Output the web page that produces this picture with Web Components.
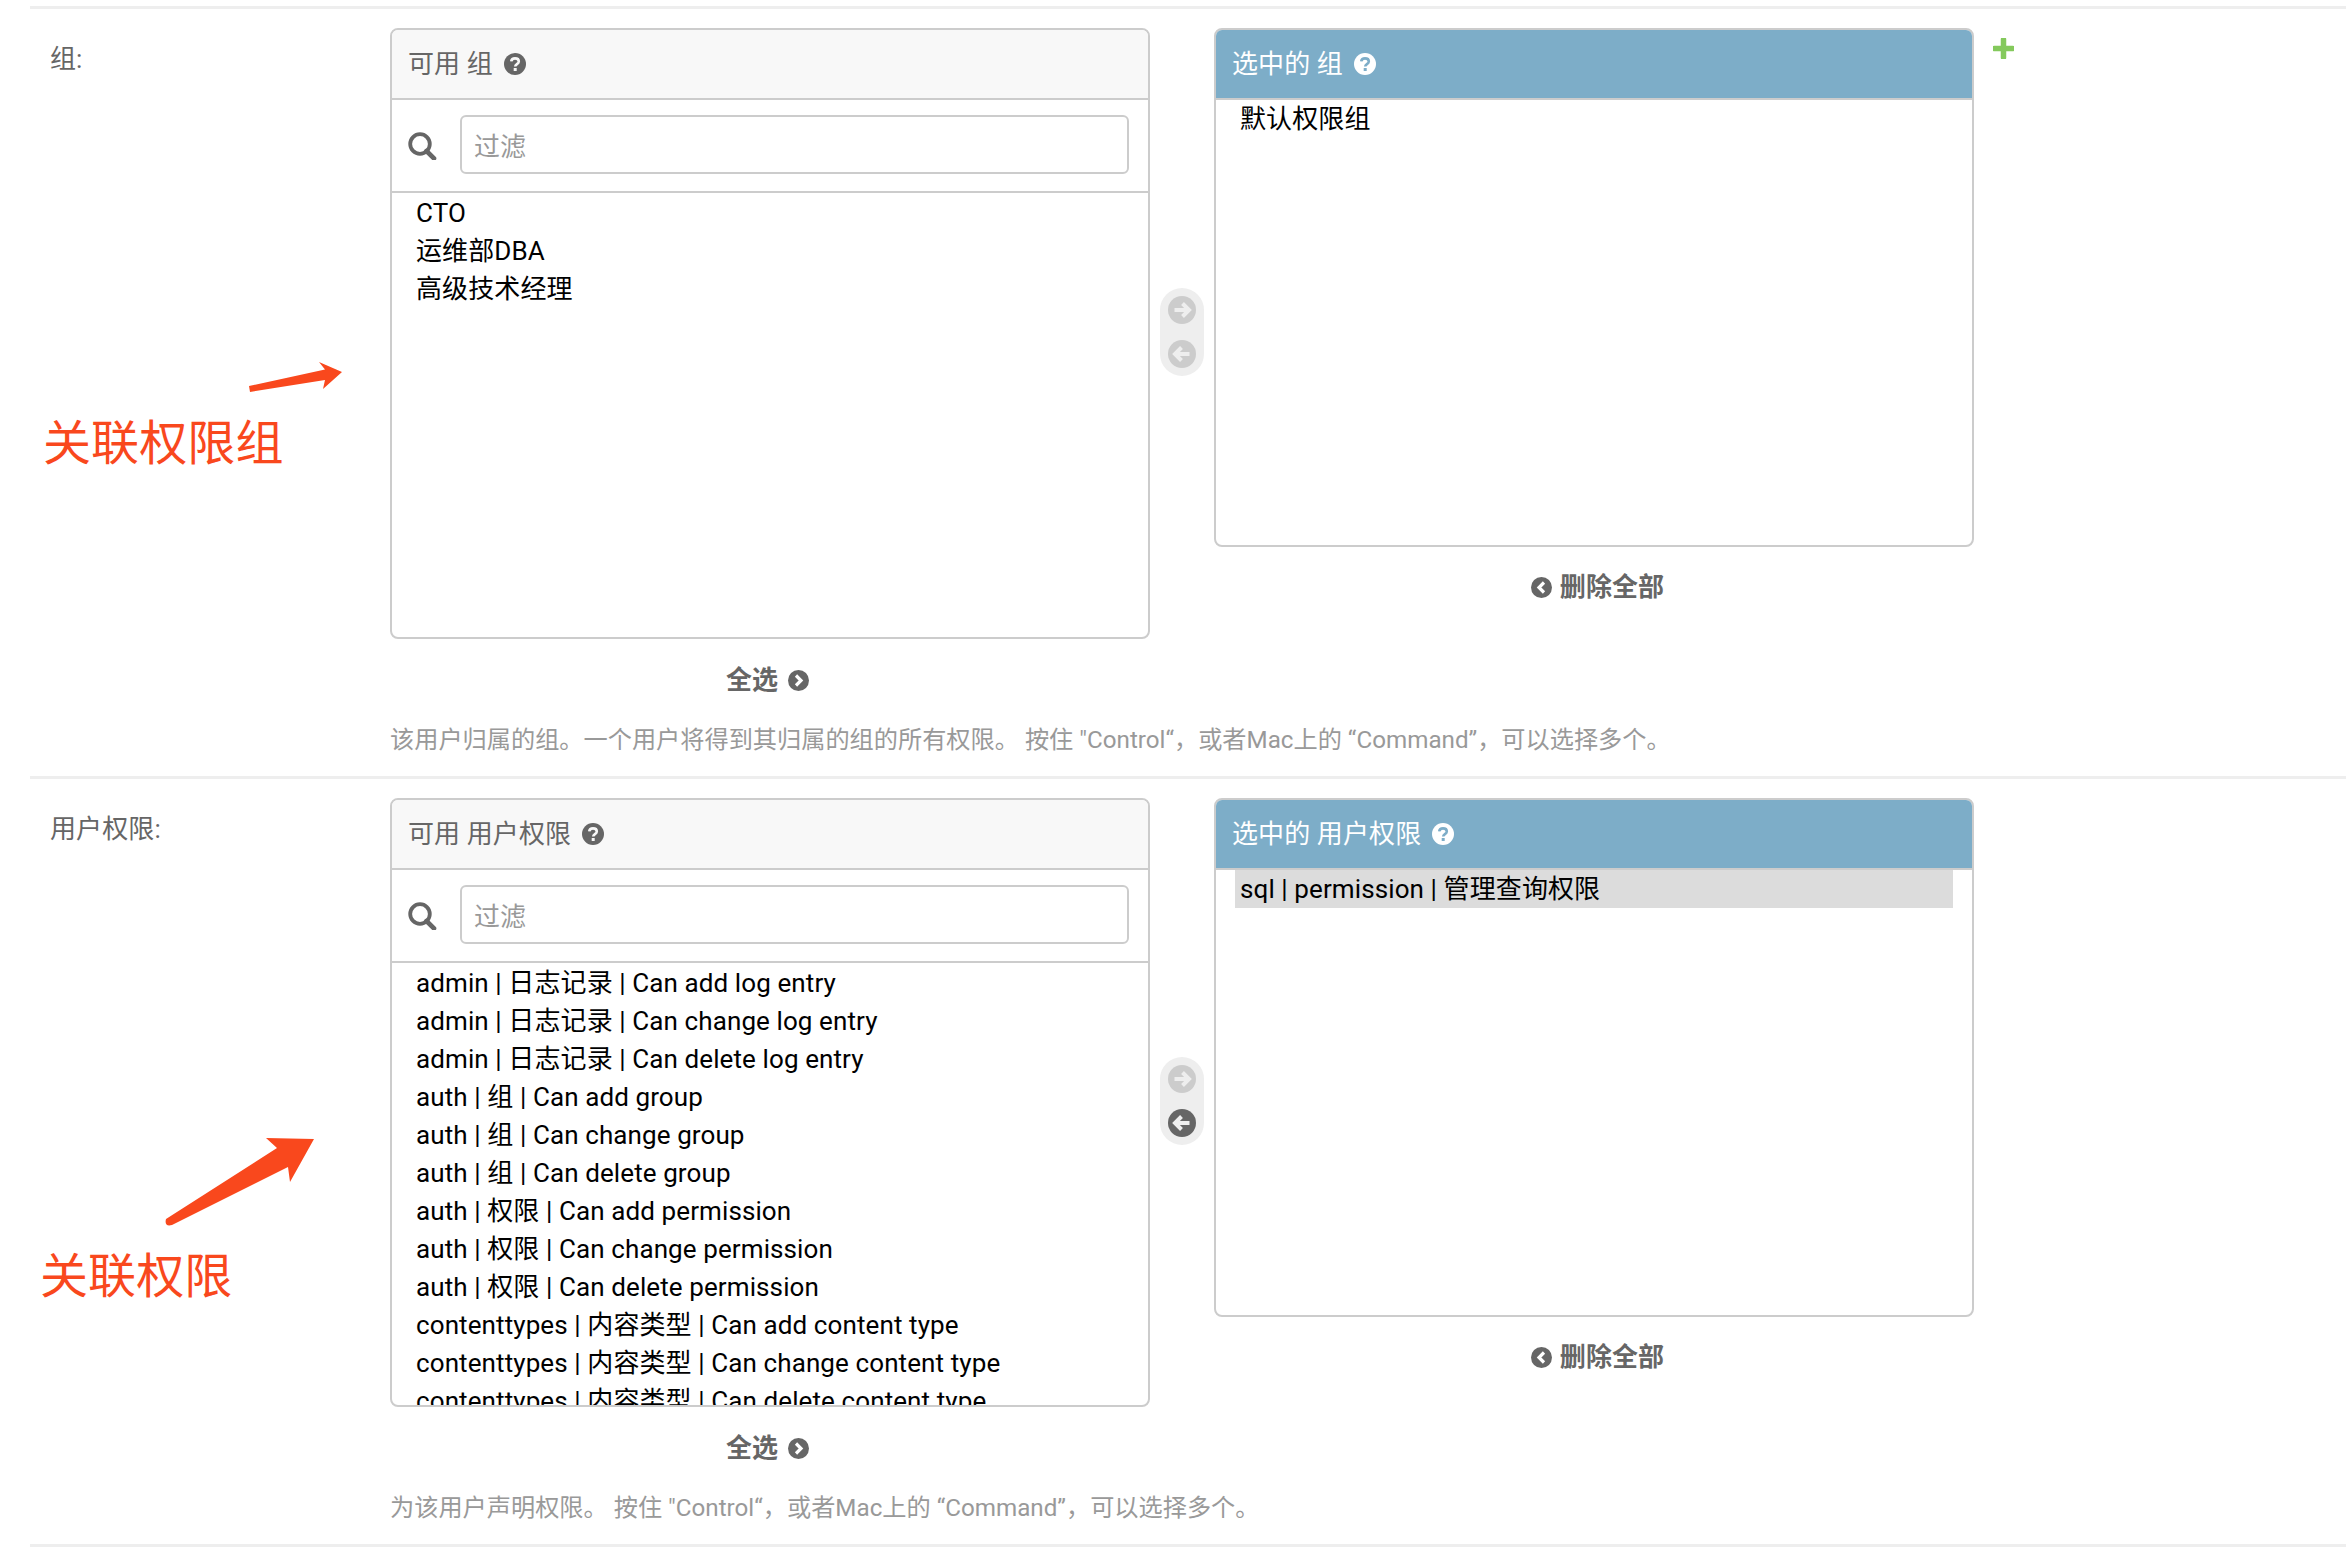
<!DOCTYPE html>
<html lang="zh">
<head>
<meta charset="utf-8">
<title>用户权限</title>
<style>
  html, body { margin: 0; background: #fff; }
  body { height: 1566px; overflow: hidden; font-family: Roboto, "Noto Sans CJK SC", sans-serif; }
</style>
</head>
<body>
<admin-form>
  <form-row label="组:" help='该用户归属的组。一个用户将得到其归属的组的所有权限。 按住 "Control“，或者Mac上的 “Command”，可以选择多个。'>
    <filter-selector name="组" list-height="611" chosen-height="519" add-link>
      <option-item slot="available">CTO</option-item>
      <option-item slot="available">运维部DBA</option-item>
      <option-item slot="available">高级技术经理</option-item>
      <option-item slot="chosen">默认权限组</option-item>
    </filter-selector>
    <red-note slot="note" style="left:13px;top:406px">关联权限组</red-note>
    <red-arrow slot="note" kind="flat"></red-arrow>
  </form-row>
  <form-row label="用户权限:" help='为该用户声明权限。 按住 "Control“，或者Mac上的 “Command”，可以选择多个。'>
    <filter-selector name="用户权限" list-height="609" chosen-height="519" remove-active>
      <option-item slot="available">admin | 日志记录 | Can add log entry</option-item>
      <option-item slot="available">admin | 日志记录 | Can change log entry</option-item>
      <option-item slot="available">admin | 日志记录 | Can delete log entry</option-item>
      <option-item slot="available">auth | 组 | Can add group</option-item>
      <option-item slot="available">auth | 组 | Can change group</option-item>
      <option-item slot="available">auth | 组 | Can delete group</option-item>
      <option-item slot="available">auth | 权限 | Can add permission</option-item>
      <option-item slot="available">auth | 权限 | Can change permission</option-item>
      <option-item slot="available">auth | 权限 | Can delete permission</option-item>
      <option-item slot="available">contenttypes | 内容类型 | Can add content type</option-item>
      <option-item slot="available">contenttypes | 内容类型 | Can change content type</option-item>
      <option-item slot="available">contenttypes | 内容类型 | Can delete content type</option-item>
      <option-item slot="chosen" selected>sql | permission | 管理查询权限</option-item>
    </filter-selector>
    <red-note slot="note" style="left:10px;top:469px">关联权限</red-note>
    <red-arrow slot="note" kind="steep"></red-arrow>
  </form-row>
</admin-form>

<script>
const circleArrow = (dir, fill, stroke) => `
  <svg width="28" height="28" viewBox="0 0 28 28" style="display:block">
    <circle cx="14" cy="14" r="14" fill="${fill}"/>
    <path d="${dir === 'right' ? 'M6.5 14H21M14.5 7.5L21 14l-6.5 6.5' : 'M21.5 14H7M13.5 7.5L7 14l6.5 6.5'}"
      fill="none" stroke="${stroke}" stroke-width="4"/>
  </svg>`;

const circleChevron = dir => `
  <svg width="21" height="21" viewBox="0 0 21 21" style="display:block">
    <circle cx="10.5" cy="10.5" r="10.5" fill="#666"/>
    <path d="${dir === 'right' ? 'M8 5.5l5 5-5 5' : 'M13 5.5l-5 5 5 5'}" fill="none" stroke="#fff" stroke-width="3.2"/>
  </svg>`;

const helpIcon = (fill, mark) => `
  <svg width="22" height="22" viewBox="0 0 22 22" style="display:block">
    <circle cx="11" cy="11" r="11" fill="${fill}"/>
    <path d="M7.2 8.4c.3-2 1.8-3 3.8-3 2.200 0 3.800 1.200 3.800 3 0 2.800-3.600 2.600-3.600 5.200" fill="none" stroke="${mark}" stroke-width="2.600"/>
    <rect x="9.700" y="15" width="3" height="3" fill="${mark}"/>
  </svg>`;

class AdminForm extends HTMLElement {
  constructor() {
    super();
    this.attachShadow({ mode: 'open' }).innerHTML = `
      <style>
        :host { display: block; margin: 6px 0 0 30px; border-bottom: 3px solid #eee; }
      </style>
      <slot></slot>`;
  }
}

class FormRow extends HTMLElement {
  constructor() {
    super();
    this.attachShadow({ mode: 'open' }).innerHTML = `
      <style>
        :host { display: flex; position: relative; border-top: 3px solid #eee; padding: 19px 0 17px 20px; font-size: 26px; letter-spacing: .1px; }
        .label { width: 340px; flex: none; padding-top: 12px; line-height: 38px; color: #666; }
        .main { flex: none; width: 1640px; }
        .help { margin-top: 22px; line-height: 38px; font-size: 24.2px; letter-spacing: 0; color: #999; white-space: nowrap; }
      </style>
      <div class="label"></div>
      <div class="main">
        <slot></slot>
        <div class="help"></div>
      </div>
      <slot name="note"></slot>`;
  }
  connectedCallback() {
    this.shadowRoot.querySelector('.label').textContent = this.getAttribute('label');
    this.shadowRoot.querySelector('.help').textContent = this.getAttribute('help');
  }
}

class FilterSelector extends HTMLElement {
  constructor() {
    super();
    this.attachShadow({ mode: 'open' }).innerHTML = `
      <style>
        :host { display: flex; align-items: flex-start; line-height: 38px; }
        .side { flex: none; width: 760px; }
        .box { box-sizing: border-box; border: 2px solid #ccc; border-radius: 8px; overflow: hidden; display: flex; flex-direction: column; }
        .title { flex: none; box-sizing: border-box; height: 70px; display: flex; align-items: center; gap: 11px; padding: 0 16px; background: #f8f8f8; color: #666; border-bottom: 2px solid #ccc; }
        .chosen .title { background: #7dadc8; color: #fff; }
        .filter { flex: none; box-sizing: border-box; height: 93px; display: flex; align-items: center; gap: 23px; padding: 0 19px 2px 16px; border-bottom: 2px solid #ccc; }
        .filter svg { margin-top: 3px; }
        .field { flex: 1; box-sizing: border-box; height: 59px; border: 2px solid #ccc; border-radius: 6px; padding: 5px 12px 0; display: flex; align-items: center; color: #999; }
        .list { flex: 1; overflow: hidden; padding: 1px 19px 0; }
        .chosen .list { padding-top: 0; }
        .link { display: flex; align-items: center; justify-content: center; gap: 10px; font-weight: 700; color: #666; margin: 22px 5px 0 0; }
        .chosen .link { margin: 21px 0 0 7px; gap: 8px; }
        .chooser { flex: none; width: 64px; display: flex; justify-content: center; align-self: stretch; align-items: center; height: var(--list-height); }
        .pill { box-sizing: border-box; width: 44px; height: 88px; margin-top: -4px; border-radius: 22px; background: #eee; display: flex; flex-direction: column; align-items: center; justify-content: center; gap: 16px; }
        .add { flex: none; margin: 10px 0 0 19px; }
      </style>
      <div class="side">
        <div class="box available">
          <div class="title"><span class="t-a"></span><span class="help-a"></span></div>
          <div class="filter">
            <svg width="29" height="28" viewBox="0 0 29 28" style="display:block">
              <circle cx="12" cy="12" r="9.800" fill="none" stroke="#666" stroke-width="3.800"/>
              <path d="M18.500 19L26 26.500" stroke="#666" stroke-width="4.600" stroke-linecap="round"/>
            </svg>
            <div class="field">过滤</div>
          </div>
          <div class="list"><slot name="available"></slot></div>
        </div>
        <div class="link"><span>全选</span><span class="all"></span></div>
      </div>
      <div class="chooser"><div class="pill"><span class="to"></span><span class="from"></span></div></div>
      <div class="side chosen">
        <div class="box">
          <div class="title"><span class="t-c"></span><span class="help-c"></span></div>
          <div class="list"><slot name="chosen"></slot></div>
        </div>
        <div class="link"><span class="none"></span><span>删除全部</span></div>
      </div>
      <div class="add">
        <svg width="21" height="21" viewBox="0 0 21 21" style="display:block">
          <path d="M10.500 1.500v18M1.500 10.500h18" stroke="#84c95c" stroke-width="5.500" stroke-linecap="round"/>
        </svg>
      </div>`;
  }
  connectedCallback() {
    const s = this.shadowRoot;
    const name = this.getAttribute('name');
    s.querySelector('.t-a').textContent = '可用 ' + name;
    s.querySelector('.t-c').textContent = '选中的 ' + name;
    s.querySelector('.help-a').innerHTML = helpIcon('#666', '#f8f8f8');
    s.querySelector('.help-c').innerHTML = helpIcon('#fff', '#7dadc8');
    s.querySelector('.all').innerHTML = circleChevron('right');
    s.querySelector('.none').innerHTML = circleChevron('left');
    s.querySelector('.to').innerHTML = circleArrow('right', '#ccc', '#eee');
    s.querySelector('.from').innerHTML = circleArrow('left', this.hasAttribute('remove-active') ? '#666' : '#ccc', '#eee');
    s.querySelector('.available').style.height = this.getAttribute('list-height') + 'px';
    s.querySelector('.chosen .box').style.height = this.getAttribute('chosen-height') + 'px';
    this.style.setProperty('--list-height', this.getAttribute('list-height') + 'px');
    if (!this.hasAttribute('add-link')) s.querySelector('.add').style.visibility = 'hidden';
  }
}

class OptionItem extends HTMLElement {
  constructor() {
    super();
    this.attachShadow({ mode: 'open' }).innerHTML = `
      <style>
        :host { display: block; height: 38px; padding-left: 5px; line-height: 38px; color: #000; white-space: nowrap; }
        :host([selected]) { background: #dcdcdc; }
      </style>
      <slot></slot>`;
  }
}

class RedNote extends HTMLElement {
  constructor() {
    super();
    this.attachShadow({ mode: 'open' }).innerHTML = `
      <style>
        :host { position: absolute; font-size: 48px; line-height: 58px; color: #f9481d; white-space: nowrap; }
      </style>
      <slot></slot>`;
  }
}

class RedArrow extends HTMLElement {
  constructor() {
    super();
    const steep = this.getAttribute('kind') === 'steep';
    // coordinates are relative to the top of the form row
    const d = steep
      ? 'M166 442L277 371L266 361L314 362L290 405L288 390L172 448Q164 450 166 442Z'
      : 'M249 379L325 362.500L319 355L342 365L323 382L325 373L250 385Z';
    this.attachShadow({ mode: 'open' }).innerHTML = `
      <style>
        :host { position: absolute; left: -30px; top: -2px; width: 400px; height: 480px; pointer-events: none; }
        svg { display: block; }
      </style>
      <svg width="400" height="480" viewBox="0 0 400 480"><path d="${d}" fill="#f9481d"/></svg>`;
  }
}

customElements.define('admin-form', AdminForm);
customElements.define('form-row', FormRow);
customElements.define('filter-selector', FilterSelector);
customElements.define('option-item', OptionItem);
customElements.define('red-note', RedNote);
customElements.define('red-arrow', RedArrow);
</script>
</body>
</html>
